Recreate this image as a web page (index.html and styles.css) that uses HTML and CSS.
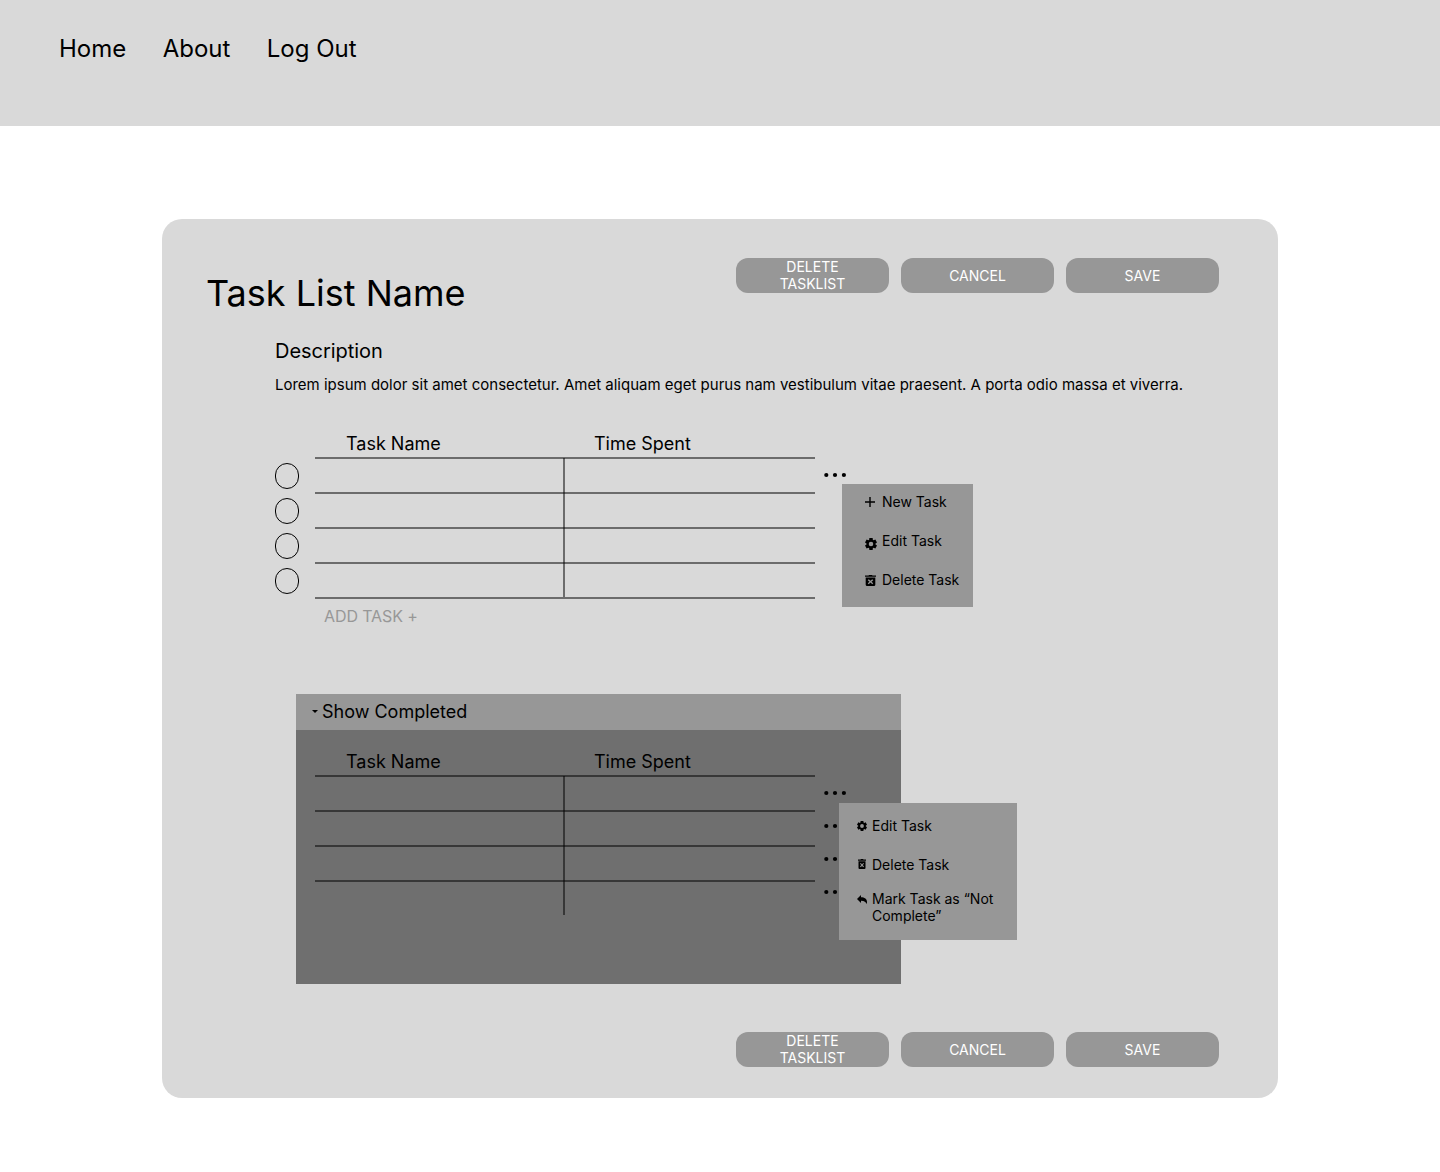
FILE: index.html
```html
<!DOCTYPE html>
<html lang="en">
<head>
<meta charset="utf-8">
<title>Task List</title>
<link rel="stylesheet" href="styles.css">
</head>
<body>
<svg class="sprite" aria-hidden="true">
  <symbol id="dots" viewBox="0 0 24 6"><circle cx="3.300" cy="3" r="2.100"/><circle cx="12" cy="3" r="2.100"/><circle cx="20.900" cy="3" r="2.100"/></symbol>
  <symbol id="plus" viewBox="5 5 14 14"><path d="M19 13h-6v6h-2v-6H5v-2h6V5h2v6h6v2z"/></symbol>
  <symbol id="gear" viewBox="2 2 20 20"><path fill-rule="evenodd" d="M9.25 22l-.4-3.2q-.33-.13-.61-.3t-.57-.38L4.7 19.380 1.950 14.620l2.570-1.950q-.02-.17-.02-.34v-.68q0-.16.02-.33L1.950 9.380 4.700 4.620l2.970 1.250q.28-.2.58-.37t.6-.3l.4-3.200h5.500l.4 3.200q.33.13.61.3t.57.37l2.970-1.250 2.750 4.760-2.570 1.950q.02.17.02.33v.68q0 .16-.05.33l2.570 1.950-2.750 4.760-2.950-1.260q-.27.21-.57.38t-.6.3l-.4 3.200zM12 8.200a3.800 3.800 0 1 0 0 7.600a3.800 3.800 0 1 0 0-7.600z"/></symbol>
  <symbol id="trash" viewBox="4 3 16 18" preserveAspectRatio="none"><path fill-rule="evenodd" d="M4 4h5l1-1h4l1 1h5v2H4zM5 7h14v12q0 2-2 2H7q-2 0-2-2zM9.400 10L8 11.400 10.600 14 8 16.600 9.400 18l2.600-2.600 2.600 2.600 1.400-1.400-2.600-2.600 2.600-2.600L14.600 10 12 12.600z"/></symbol>
  <symbol id="reply" viewBox="0 0 20 18"><path d="M8 0v4.500c7 0 12 3 12 9.500 0 1.800-.4 3-1 4-.8-4-4-6.500-11-6.500V16L0 8z"/></symbol>
</svg>

<nav class="navbar">
  <a>Home</a>
  <a>About</a>
  <a>Log Out</a>
</nav>

<main class="panel">
  <header class="panel-head">
    <h1>Task List Name</h1>
    <div class="actions">
      <button>DELETE TASKLIST</button>
      <button>CANCEL</button>
      <button>SAVE</button>
    </div>
  </header>

  <section class="description">
    <h2>Description</h2>
    <p>Lorem ipsum dolor sit amet consectetur. Amet aliquam eget purus nam vestibulum vitae praesent. A porta odio massa et viverra.</p>
  </section>

  <section class="tasks">
    <div class="checks"><i></i><i></i><i></i><i></i></div>
    <div class="table-wrap">
      <div class="columns"><span>Task Name</span><span>Time Spent</span></div>
      <div class="grid closed"><div></div><div></div><div></div><div></div></div>
      <div class="add">ADD TASK +</div>
    </div>
    <div class="more">
      <svg><use href="#dots"/></svg>
      <ul class="menu menu-open">
        <li><svg class="plus"><use href="#plus"/></svg>New Task</li>
        <li><svg class="gear"><use href="#gear"/></svg>Edit Task</li>
        <li><svg class="trash"><use href="#trash"/></svg>Delete Task</li>
      </ul>
    </div>
  </section>

  <section class="completed">
    <div class="toggle"><i class="caret"></i>Show Completed</div>
    <div class="completed-body">
      <div class="table-wrap">
        <div class="columns"><span>Task Name</span><span>Time Spent</span></div>
        <div class="grid"><div></div><div></div><div></div><div></div></div>
      </div>
      <div class="more">
        <svg><use href="#dots"/></svg>
        <svg><use href="#dots"/></svg>
        <svg><use href="#dots"/></svg>
        <svg><use href="#dots"/></svg>
        <ul class="menu menu-done">
          <li><svg class="gear"><use href="#gear"/></svg>Edit Task</li>
          <li><svg class="trash"><use href="#trash"/></svg>Delete Task</li>
          <li><svg class="reply"><use href="#reply"/></svg>Mark Task as “Not Complete”</li>
        </ul>
      </div>
    </div>
  </section>

  <footer class="actions">
    <button>DELETE TASKLIST</button>
    <button>CANCEL</button>
    <button>SAVE</button>
  </footer>
</main>
</body>
</html>
```
FILE: styles.css
```css
* { box-sizing: border-box; margin: 0; padding: 0; }

body {
  min-height: 1172px;
  background: #fff;
  color: #000;
  font-family: Inter, "Liberation Sans", sans-serif;
}

.sprite { display: none; }

.navbar {
  display: flex;
  gap: 36.4px;
  height: 126px;
  padding: 34px 59px;
  background: #d9d9d9;
  font-size: 24px;
  line-height: 29px;
}

.panel {
  width: 1116px;
  height: 879px;
  margin: 93px auto 0;
  padding: 39px 59px 0 44px;
  border-radius: 20px;
  background: #d9d9d9;
}

.panel-head {
  display: flex;
  justify-content: space-between;
  align-items: flex-start;
  height: 81px;
}

h1 { margin-top: 13px; font-size: 36px; font-weight: 400; line-height: 44px; }

.actions { display: flex; justify-content: flex-end; gap: 12px; }

button {
  width: 153px;
  height: 35px;
  padding: 0 36px 1px;
  border: 0;
  border-radius: 12px;
  background: #979797;
  color: #fff;
  font: 400 14px/17px Inter, "Liberation Sans", sans-serif;
}

.description { height: 94px; padding-left: 69px; }
h2 { font-size: 20px; font-weight: 400; line-height: 24px; letter-spacing: -.05px; }
.description p { margin-top: 13px; font-size: 15px; line-height: 18px; white-space: nowrap; }

.tasks { display: flex; height: 261px; padding-left: 69px; }
.checks { display: flex; flex-direction: column; gap: 9px; margin: 30px 16px 0 0; }
.checks i { width: 24px; height: 26px; border: 1px solid #000; border-radius: 12px; }

.table-wrap { width: 500px; }
.columns {
  display: grid;
  grid-template-columns: 248px 1fr;
  height: 24px;
  padding-left: 31px;
  font-size: 18px;
  line-height: 22px;
}
.grid { background: linear-gradient(rgba(0, 0, 0, .5), rgba(0, 0, 0, .5)) 248px 1px / 2px 139px no-repeat; }
.grid div { height: 35px; border-top: 2px solid rgba(0, 0, 0, .5); }
.grid.closed { height: 142px; border-bottom: 2px solid rgba(0, 0, 0, .5); }
.add { margin: 8px 0 0 9px; color: #979797; font-size: 16px; line-height: 19px; letter-spacing: -.1px; }

.more {
  position: relative;
  display: flex;
  flex-direction: column;
  gap: 27px;
  width: 24px;
  margin: 39px 0 0 8px;
}
.more > svg { width: 24px; height: 6px; }

.menu {
  position: absolute;
  display: flex;
  flex-direction: column;
  background: #979797;
  font-size: 14px;
  line-height: 17px;
  list-style: none;
}
.menu li { display: flex; align-items: flex-start; min-height: 17px; }
.menu svg { flex: none; }

.menu-open { top: 12px; left: 19px; gap: 22px; width: 131px; height: 123px; padding: 9px 0 0 23px; white-space: nowrap; }
.menu-open li { height: 17px; }
.menu-open .plus { width: 10px; height: 10px; margin: 4px 7px 0 0; }
.menu-open .gear { width: 12px; height: 12px; margin: 6px 5.5px 0 -.5px; }
.menu-open .trash { width: 11px; height: 11px; margin: 4px 6px 0 0; }

.menu-done { top: 13px; left: 16px; width: 178px; height: 137px; padding: 14px 20px 0 18px; }
.menu-done li:nth-child(2) { margin-top: 22px; }
.menu-done li:nth-child(3) { margin-top: 17px; }
.menu-done .gear { width: 10px; height: 10px; margin: 4px 5px 0 0; }
.menu-done .trash { width: 8px; height: 10px; margin: 3px 6px 0 1px; }
.menu-done .reply { width: 10px; height: 9px; margin: 5px 5px 0 0; }

.completed { width: 605px; height: 290px; margin-left: 90px; background: #6f6f6f; }
.toggle {
  display: flex;
  align-items: center;
  height: 36px;
  padding: 0 0 1px 16px;
  background: #979797;
  font-size: 18px;
  line-height: 22px;
}
.caret { width: 6px; height: 3px; margin: 0 4px 0 0; background: #000; clip-path: polygon(0 0, 100% 0, 50% 100%); }
.completed-body { display: flex; padding: 21px 0 0 19px; }

footer.actions { margin-top: 48px; }
```
